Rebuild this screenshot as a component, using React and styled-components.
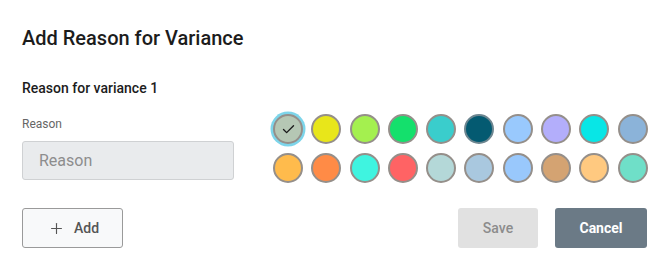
import React, { useState } from "react";
import styled, { createGlobalStyle } from "styled-components";
import { Plus, Check } from "lucide-react";

const GlobalStyle = createGlobalStyle`
  body {
    margin: 0;
    background: #ffffff;
    font-family: Roboto, "Liberation Sans", Arial, sans-serif;
  }
`;

const COLORS = [
  "#b5c7b4", "#e8e61a", "#a4f04f", "#14e06c", "#3acdcc",
  "#045a71", "#99c9fd", "#b3aefb", "#08e6e6", "#8bb3d9",
  "#ffbb4c", "#ff8b46", "#3ff4e0", "#ff6364", "#b4d8d8",
  "#a9c8df", "#99c8fc", "#d4a372", "#ffc980", "#6fdfc8",
];

const Wrapper = styled.div`
  padding: 26px 23px 0 22px;
  width: 670px;
  box-sizing: border-box;
`;

const Title = styled.h2`
  margin: 0 0 29px;
  font-size: 20px;
  line-height: 24px;
  font-weight: 500;
  color: #1c1c1c;
`;

const Heading = styled.h4`
  margin: 0 0 17px;
  font-size: 14px;
  line-height: 18px;
  font-weight: 500;
  color: #1c1c1c;
`;

const Body = styled.div`
  display: flex;
  align-items: flex-start;
  gap: 39px;
`;

const Field = styled.div`
  display: flex;
  flex-direction: column;
  width: 212px;
  padding-top: 2px;
`;

const Label = styled.label`
  font-size: 12px;
  line-height: 16px;
  color: #666;
  margin-bottom: 9px;
`;

const Input = styled.input`
  height: 39px;
  box-sizing: border-box;
  padding: 0 16px;
  border: 1px solid #cfd1d3;
  border-radius: 3px;
  background: #e9ebed;
  font-family: inherit;
  font-size: 16px;
  color: #333;
  outline: none;

  &::placeholder {
    color: #8d8d8d;
  }
`;

const Swatches = styled.div`
  display: grid;
  grid-template-columns: repeat(10, 30px);
  column-gap: 8.3px;
  row-gap: 9px;
`;

const Swatch = styled.button`
  width: 30px;
  height: 30px;
  padding: 0;
  border-radius: 50%;
  border: 2px solid ${({ $dark }) => ($dark ? "#6d8690" : "#958f8a")};
  background: ${({ $color }) => $color};
  box-shadow: ${({ $selected }) => ($selected ? "0 0 0 2.5px #7dd5ea" : "none")};
  display: flex;
  align-items: center;
  justify-content: center;
  cursor: pointer;
  box-sizing: border-box;
  color: #1a1a1a;
`;

const Footer = styled.div`
  display: flex;
  align-items: center;
  margin-top: 25px;
`;

const Button = styled.button`
  height: 40px;
  box-sizing: border-box;
  border-radius: 3px;
  font-family: inherit;
  font-size: 14px;
  cursor: pointer;
  display: flex;
  align-items: center;
  justify-content: center;
`;

const AddButton = styled(Button)`
  width: 101px;
  gap: 9px;
  padding-right: 4px;
  background: #f8f9fa;
  border: 1px solid #9a9a9a;
  color: #555;
  font-weight: 500;
`;

const Spacer = styled.div`
  flex: 1;
`;

const SaveButton = styled(Button)`
  width: 80px;
  margin-right: 17px;
  border: none;
  background: #e1e1e1;
  color: #8c8c8c;
  font-weight: 500;
`;

const CancelButton = styled(Button)`
  width: 92px;
  border: none;
  background: #6b7a86;
  color: #ffffff;
  font-weight: 700;
`;

export default function App() {
  const [selected, setSelected] = useState(0);
  const [reason, setReason] = useState("");

  return (
    <>
      <GlobalStyle />
      <Wrapper>
        <Title>Add Reason for Variance</Title>
        <Heading>Reason for variance 1</Heading>
        <Body>
          <Field>
            <Label>Reason</Label>
            <Input
              type="text"
              placeholder="Reason"
              value={reason}
              onChange={(e) => setReason(e.target.value)}
            />
          </Field>
          <Swatches>
            {COLORS.map((c, i) => (
              <Swatch
                key={c + i}
                $color={c}
                $dark={i === 5}
                $selected={i === selected}
                onClick={() => setSelected(i)}
              >
                {i === selected && <Check size={15} strokeWidth={2.2} />}
              </Swatch>
            ))}
          </Swatches>
        </Body>
        <Footer>
          <AddButton>
            <Plus size={17} strokeWidth={1.6} />
            Add
          </AddButton>
          <Spacer />
          <SaveButton disabled>Save</SaveButton>
          <CancelButton>Cancel</CancelButton>
        </Footer>
      </Wrapper>
    </>
  );
}
